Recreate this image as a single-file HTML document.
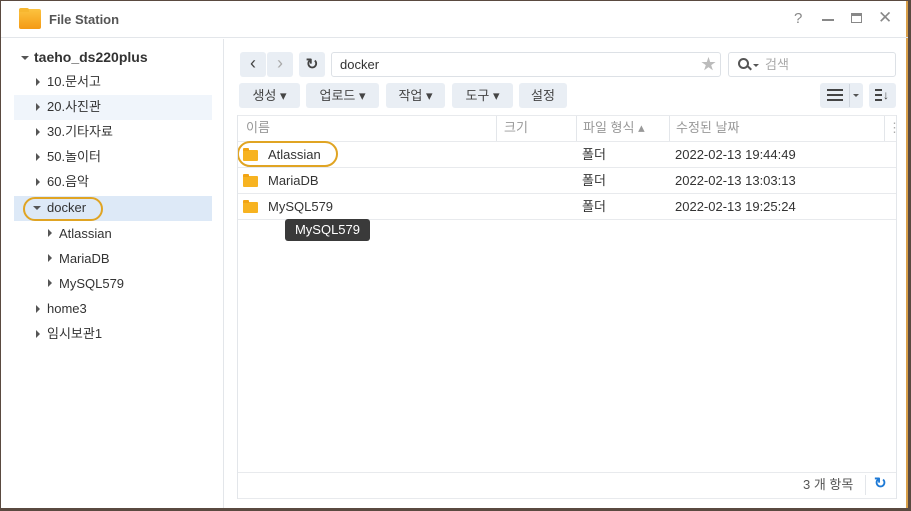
<!DOCTYPE html>
<html><head><meta charset="utf-8"><style>
*{box-sizing:border-box;margin:0;padding:0}
body{width:911px;height:511px;overflow:hidden;background:#5a4a40;font-family:"Liberation Sans","Noto Sans CJK KR",sans-serif;font-size:13px;color:#333;position:relative}
.win{position:absolute;left:1px;top:1px;width:907px;height:507px;background:#fff;border-right:2px solid #d9a04a}
.abs{position:absolute}
.title{left:0;top:0;width:907px;height:37px;border-bottom:1px solid #e3e6ea}
.side{left:0;top:38px;width:223px;height:469px;border-right:1px solid #e3e6ea}
.t{position:absolute;font-size:13px;line-height:16px;height:16px;color:#333;white-space:nowrap}
.tri{position:absolute;width:0;height:0;border-top:4px solid transparent;border-bottom:4px solid transparent;border-left:4px solid #555}
.trid{position:absolute;width:0;height:0;border-left:4px solid transparent;border-right:4px solid transparent;border-top:4px solid #555}
.btn{position:absolute;background:#e9eef4;border-radius:3px;height:25px;font-size:13px;color:#444;text-align:center;line-height:25px}
.hl{position:absolute;border:2px solid #e0a423;border-radius:14px}
.line{position:absolute;height:1px;background:#e8eaed}
.vs{position:absolute;width:1px;background:#e3e6ea}
.fold{position:absolute;width:15px;height:11px;background:#f7b321;border-radius:1px}
.fold:before{content:"";position:absolute;left:0;top:-2px;width:6px;height:3px;background:#f2a413;border-radius:1px 1px 0 0}
</style></head><body>
<div class="win">
 <div class="abs title">
  <div class="abs" style="left:18px;top:8px;width:22px;height:20px;background:linear-gradient(#fcc340,#f49a14);border-radius:2px"></div>
  <div class="abs" style="left:18px;top:7px;width:10px;height:4px;background:#f7b730;border-radius:2px 2px 0 0"></div>
  <div class="t" style="left:48px;top:11px;font-weight:bold;color:#555">File Station</div>
  <div class="t" style="left:793px;top:10px;font-size:15px;color:#888">?</div>
  <div class="abs" style="left:821px;top:18px;width:12px;height:2px;background:#888"></div>
  <div class="abs" style="left:850px;top:12px;width:11px;height:10px;border:1.5px solid #888;border-top-width:3px"></div>
  <div class="t" style="left:877px;top:9px;font-size:17px;color:#888">✕</div>
 </div>
 <div class="abs side">
  <div class="abs" style="left:13px;top:56px;width:198px;height:25px;background:#f0f5fb"></div>
  <div class="abs" style="left:13px;top:157px;width:198px;height:25px;background:#dde9f7"></div>
  <div class="trid" style="left:20px;top:17px"></div>
  <div class="t" style="left:33px;top:10px;font-weight:bold;font-size:14px">taeho_ds220plus</div>
  <div class="tri" style="left:35px;top:39px"></div><div class="t" style="left:46px;top:35px">10.문서고</div>
  <div class="tri" style="left:35px;top:64px"></div><div class="t" style="left:46px;top:60px">20.사진관</div>
  <div class="tri" style="left:35px;top:89px"></div><div class="t" style="left:46px;top:85px">30.기타자료</div>
  <div class="tri" style="left:35px;top:114px"></div><div class="t" style="left:46px;top:110px">50.놀이터</div>
  <div class="tri" style="left:35px;top:139px"></div><div class="t" style="left:46px;top:135px">60.음악</div>
  <div class="trid" style="left:32px;top:167px"></div><div class="t" style="left:46px;top:161px">docker</div>
  <div class="hl" style="left:22px;top:158px;width:80px;height:24px"></div>
  <div class="tri" style="left:47px;top:190px"></div><div class="t" style="left:58px;top:187px">Atlassian</div>
  <div class="tri" style="left:47px;top:215px"></div><div class="t" style="left:58px;top:212px">MariaDB</div>
  <div class="tri" style="left:47px;top:240px"></div><div class="t" style="left:58px;top:237px">MySQL579</div>
  <div class="tri" style="left:35px;top:266px"></div><div class="t" style="left:46px;top:262px">home3</div>
  <div class="tri" style="left:35px;top:291px"></div><div class="t" style="left:46px;top:287px">임시보관1</div>
 </div>
 <!-- nav -->
 <div class="btn" style="left:239px;top:51px;width:26px;font-size:18px;line-height:23px">‹</div>
 <div class="btn" style="left:266px;top:51px;width:26px;font-size:18px;line-height:23px;color:#aaa">›</div>
 <div class="btn" style="left:298px;top:51px;width:26px;font-size:15px;font-weight:bold">↻</div>
 <div class="abs" style="left:330px;top:51px;width:390px;height:25px;border:1px solid #dde1e6;border-radius:3px"></div>
 <div class="t" style="left:339px;top:56px">docker</div>
 <div class="t" style="left:700px;top:56px;color:#bbb;font-size:15px">★</div>
 <div class="abs" style="left:727px;top:51px;width:168px;height:25px;border:1px solid #dde1e6;border-radius:3px"></div>
 <div class="abs" style="left:737px;top:57px;width:11px;height:11px;border:2px solid #555;border-radius:50%"></div>
 <div class="abs" style="left:746px;top:66px;width:5px;height:2px;background:#555;transform:rotate(45deg)"></div>
 <div class="trid" style="left:752px;top:63px;border-top-color:#555;border-width:3px"></div>
 <div class="t" style="left:764px;top:56px;color:#aaa">검색</div>
 <!-- toolbar -->
 <div class="btn" style="left:238px;top:82px;width:61px">생성 ▾</div>
 <div class="btn" style="left:305px;top:82px;width:73px">업로드 ▾</div>
 <div class="btn" style="left:385px;top:82px;width:59px">작업 ▾</div>
 <div class="btn" style="left:451px;top:82px;width:61px">도구 ▾</div>
 <div class="btn" style="left:518px;top:82px;width:48px">설정</div>
 <div class="btn" style="left:819px;top:82px;width:43px"></div>
 <div class="abs" style="left:826px;top:88px;width:16px;height:12px;border-top:2px solid #444;border-bottom:2px solid #444"></div>
 <div class="abs" style="left:826px;top:93px;width:16px;height:2px;background:#444"></div>
 <div class="abs" style="left:848px;top:83px;width:1px;height:23px;background:#d0d6de"></div>
 <div class="trid" style="left:852px;top:93px;border-width:3px"></div>
 <div class="btn" style="left:868px;top:82px;width:27px"></div>
 <div class="abs" style="left:874px;top:88px;width:7px;height:12px;border-top:2px solid #444;border-bottom:2px solid #444"></div>
 <div class="abs" style="left:874px;top:93px;width:7px;height:2px;background:#444"></div>
 <div class="t" style="left:882px;top:86px;font-size:12px;font-weight:bold;color:#444">↓</div>
 <!-- header -->
 <div class="line" style="left:237px;top:114px;width:659px"></div>
 <div class="line" style="left:237px;top:140px;width:659px"></div>
 <div class="vs" style="left:495px;top:115px;height:25px"></div>
 <div class="vs" style="left:575px;top:115px;height:25px"></div>
 <div class="vs" style="left:668px;top:115px;height:25px"></div>
 <div class="vs" style="left:883px;top:115px;height:25px"></div>
 <div class="t" style="left:245px;top:119px;color:#999">이름</div>
 <div class="t" style="left:503px;top:119px;color:#999">크기</div>
 <div class="t" style="left:582px;top:119px;color:#999">파일 형식 ▴</div>
 <div class="t" style="left:675px;top:119px;color:#999">수정된 날짜</div>
 <div class="t" style="left:887px;top:119px;color:#aaa">⋮</div>
 <!-- rows -->
 <div class="fold" style="left:242px;top:149px"></div><div class="t" style="left:267px;top:146px">Atlassian</div>
 <div class="hl" style="left:236px;top:140px;width:101px;height:26px"></div>
 <div class="t" style="left:581px;top:146px">폴더</div><div class="t" style="left:674px;top:146px">2022-02-13 19:44:49</div>
 <div class="line" style="left:237px;top:166px;width:659px"></div>
 <div class="fold" style="left:242px;top:175px"></div><div class="t" style="left:267px;top:172px">MariaDB</div>
 <div class="t" style="left:581px;top:172px">폴더</div><div class="t" style="left:674px;top:172px">2022-02-13 13:03:13</div>
 <div class="line" style="left:237px;top:192px;width:659px"></div>
 <div class="fold" style="left:242px;top:201px"></div><div class="t" style="left:267px;top:198px">MySQL579</div>
 <div class="t" style="left:581px;top:198px">폴더</div><div class="t" style="left:674px;top:198px">2022-02-13 19:25:24</div>
 <div class="line" style="left:237px;top:218px;width:659px"></div>
 <div class="abs" style="left:284px;top:218px;width:85px;height:22px;background:#3a3a3a;border-radius:3px;color:#fff;font-size:13px;line-height:22px;text-align:center">MySQL579</div>
 <!-- status -->
 <div class="line" style="left:237px;top:471px;width:659px"></div>
 <div class="line" style="left:237px;top:497px;width:659px"></div>
 <div class="vs" style="left:236px;top:114px;height:384px"></div>
 <div class="vs" style="left:895px;top:114px;height:384px"></div>
 <div class="t" style="left:802px;top:476px;color:#555">3 개 항목</div>
 <div class="vs" style="left:864px;top:474px;height:20px"></div>
 <div class="t" style="left:873px;top:475px;color:#1e7ad6;font-weight:bold;font-size:15px">↻</div>
</div>
</body></html>
